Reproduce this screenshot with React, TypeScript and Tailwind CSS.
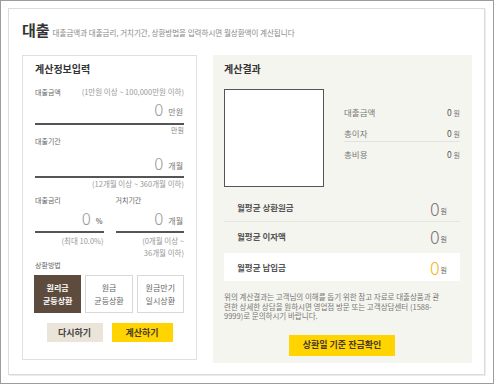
import React from "react";

const font = { fontFamily: '"Noto Sans CJK KR", "Noto Sans", sans-serif' };

// amount input with big light zero and unit
function AmountField({ unit, unitClass = "text-[8px]" }: { unit: string; unitClass?: string }) {
  return (
    <div className="flex items-end justify-end gap-[5px] h-[20px] pr-[1px]">
      <span className="text-[17px] font-light leading-[20px] text-[#9a9a9a]">0</span>
      <span className={`${unitClass} leading-[14px] text-[#777]`}>{unit}</span>
    </div>
  );
}

function ResultRow({ label, accent = false }: { label: string; accent?: boolean }) {
  return (
    <div className="flex items-center justify-between h-full px-[13px]">
      <span className="text-[8.5px] font-bold text-[#555]">{label}</span>
      <span className="flex items-end">
        <span className={`text-[18px] font-light leading-[18px] ${accent ? "text-[#f2b51b]" : "text-[#777]"}`}>0</span>
        <span className="text-[7px] leading-[12px] text-[#666] ml-[1px]">원</span>
      </span>
    </div>
  );
}

export default function App() {
  return (
    <div style={font} className="w-[494px] h-[384px] bg-white border border-[#9c9c9c] p-[7px]">
      <div className="w-[477px] h-[367px] border border-[#dcdcdc] shadow-[1px_1px_0_#ececec] pl-[13px] pr-[11px] pt-[11px]">
        {/* page title */}
        <div className="flex items-end gap-[3px] h-[20px]">
          <span className="text-[15px] font-bold leading-[20px] text-[#333]">대출</span>
          <span className="text-[7.5px] leading-[14px] text-[#888]">
            대출금액과 대출금리, 거치기간, 상환방법을 입력하시면 월상환액이 계산됩니다
          </span>
        </div>

        <div className="flex gap-[16px] mt-[15px]">
          {/* input panel */}
          <div className="w-[175px] h-[305px] border border-[#e0e0e0] bg-white px-[12px] pt-[6px]">
            <h3 className="text-[10px] font-bold leading-[14px] text-[#333]">계산정보입력</h3>

            <div className="flex justify-between mt-[11px] text-[7px] leading-[10px]">
              <span className="text-[#666]">대출금액</span>
              <span className="text-[7.5px] text-[#999]">(1만원 이상 ~ 100,000만원 이하)</span>
            </div>
            <div className="mt-[2px]">
              <AmountField unit="만원" />
            </div>
            <div className="mt-[4px] border-t-2 border-[#555]" />
            <div className="text-right text-[7px] leading-[10px] text-[#888]">만원</div>

            <div className="mt-[1px] text-[7px] leading-[10px] text-[#666]">대출기간</div>
            <div className="mt-[7px]">
              <AmountField unit="개월" />
            </div>
            <div className="mt-[3px] border-t-2 border-[#555]" />
            <div className="mt-[1px] text-right text-[7.5px] leading-[10px] text-[#999]">(12개월 이상 ~ 360개월 이하)</div>

            <div className="grid grid-cols-2 gap-x-[12px] mt-[6px]">
              <div>
                <div className="text-[7px] leading-[10px] text-[#666]">대출금리</div>
                <div className="mt-[3px]">
                  <AmountField unit="%" unitClass="text-[7px] font-bold" />
                </div>
                <div className="mt-[3px] border-t-2 border-[#555]" />
                <div className="mt-[2px] text-right text-[7.5px] leading-[12px] text-[#999]">(최대 10.0%)</div>
              </div>
              <div>
                <div className="text-[7px] leading-[10px] text-[#666]">거치기간</div>
                <div className="mt-[3px]">
                  <AmountField unit="개월" />
                </div>
                <div className="mt-[3px] border-t-2 border-[#555]" />
                <div className="mt-[2px] text-right text-[7.5px] leading-[12px] text-[#999]">
                  (0개월 이상 ~
                  <br />
                  36개월 이하)
                </div>
              </div>
            </div>

            <div className="mt-[1px] text-[7px] leading-[10px] text-[#666]">상환방법</div>
            <div className="grid grid-cols-3 gap-[4px] mt-[5px] -ml-[1px]">
              <button className="h-[38px] bg-[#5d4b3d] text-white text-[8px] font-bold leading-[13px]">
                원리금
                <br />
                균등상환
              </button>
              <button className="h-[38px] bg-white border border-[#d8d8d8] text-[#666] text-[8px] leading-[13px]">
                원금
                <br />
                균등상환
              </button>
              <button className="h-[38px] bg-white border border-[#d8d8d8] text-[#666] text-[8px] leading-[13px]">
                원금만기
                <br />
                일시상환
              </button>
            </div>

            <div className="flex justify-center gap-[9px] mt-[10px]">
              <button className="w-[56px] h-[19px] bg-[#ebe5d9] text-[9px] font-bold text-[#444]">다시하기</button>
              <button className="w-[61px] h-[19px] bg-[#ffd400] text-[9px] font-bold text-[#4a3b2a]">계산하기</button>
            </div>
          </div>

          {/* result panel */}
          <div className="w-[259px] h-[308px] bg-[#f5f5f0] pl-[11px] pr-[12px] pt-[7px]">
            <h3 className="text-[10px] font-bold leading-[14px] text-[#333]">계산결과</h3>

            <div className="flex mt-[13px]">
              <div className="w-[100px] h-[98px] border border-[#555] bg-white" />
              <div className="flex-1 ml-[20px] pt-[17px] text-[8.5px] leading-[12px]">
                <div className="flex justify-between">
                  <span className="text-[#777]">대출금액</span>
                  <span className="text-[#555]">0 <span className="text-[7px] text-[#777]">원</span></span>
                </div>
                <div className="flex justify-between mt-[8px] pb-[1px] border-b border-[#e2e2e2]">
                  <span className="text-[#777]">총이자</span>
                  <span className="text-[#555]">0 <span className="text-[7px] text-[#777]">원</span></span>
                </div>
                <div className="flex justify-between mt-[6px]">
                  <span className="text-[#777]">총비용</span>
                  <span className="text-[#555]">0 <span className="text-[7px] text-[#777]">원</span></span>
                </div>
              </div>
            </div>

            <div className="mt-[7px] h-[28px] border-b border-[#e6e6e1]">
              <ResultRow label="월평균 상환원금" />
            </div>
            <div className="h-[28px]">
              <ResultRow label="월평균 이자액" />
            </div>
            <div className="mt-[3px] h-[28px] bg-white">
              <ResultRow label="월평균 납입금" accent />
            </div>

            <p className="mt-[11px] text-[7.5px] leading-[9.5px] text-[#777] whitespace-nowrap">
              위의 계산결과는 고객님의 이해를 돕기 위한 참고 자료로 대출상품과 관
              <br />
              련한 상세한 상담을 원하시면 영업점 방문 또는 고객상담센터 (1588-
              <br />
              9999)로 문의하시기 바랍니다.
            </p>

            <div className="flex justify-center mt-[14px]">
              <button className="w-[106px] h-[21px] bg-[#ffd400] text-[9px] font-bold text-[#4a3b2a]">
                상환일 기준 잔금확인
              </button>
            </div>
          </div>
        </div>
      </div>
    </div>
  );
}
